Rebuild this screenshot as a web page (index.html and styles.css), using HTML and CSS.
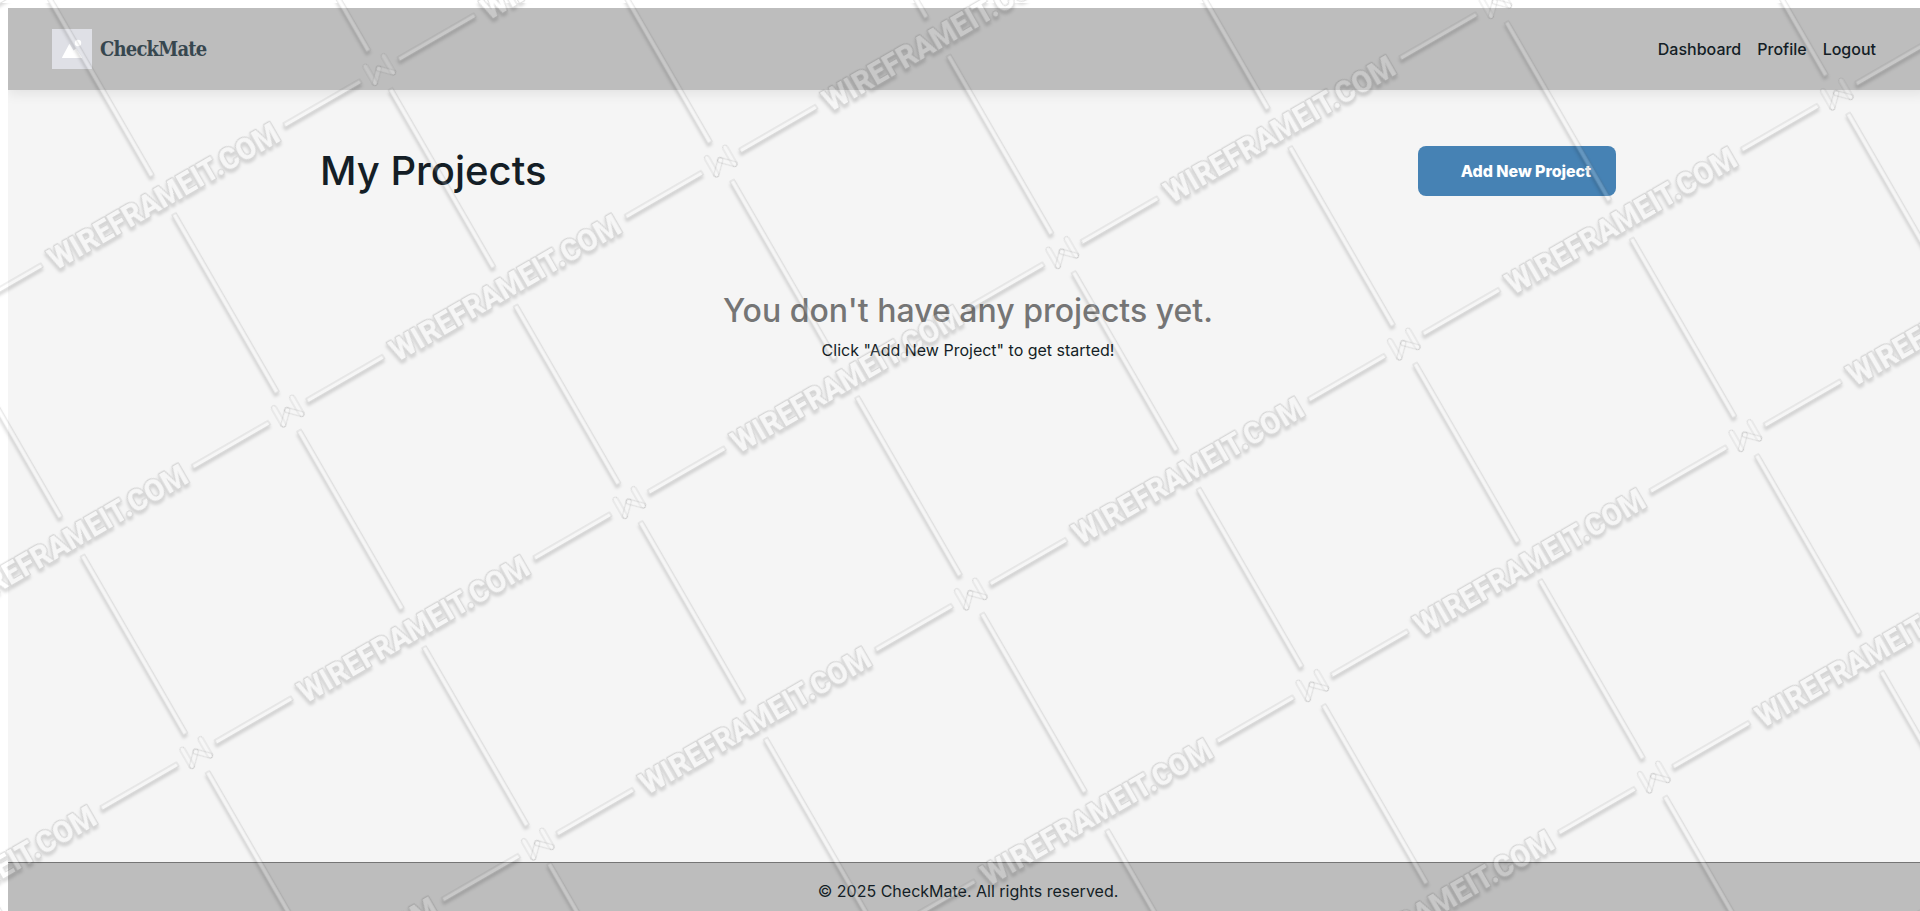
FILE: index.html
```html
<!DOCTYPE html>
<html lang="en">
<head>
<meta charset="utf-8">
<title>CheckMate</title>
<link rel="stylesheet" href="styles.css">
</head>
<body>
<div class="app">
  <header class="header">
    <div class="brand">
      <svg class="logo" viewBox="0 0 40 40"><rect width="40" height="40" fill="#dfe0e6"/><path d="M10 28.500 17 15.500Q17.500 14.500 18 15.500L21.500 21.500 24 19.500 30 28.500Q30 29 29 29H11Q10 29 10 28.500z" fill="#fff"/><circle cx="26" cy="14" r="3.200" fill="#fff"/></svg>
      <span class="brand-name">CheckMate</span>
    </div>
    <nav class="nav"><a>Dashboard</a><a>Profile</a><a>Logout</a></nav>
  </header>
  <main class="main">
    <div class="title-row">
      <h1 class="title">My Projects</h1>
      <button class="add-button">Add New Project</button>
    </div>
    <section class="empty">
      <h2 class="empty-title">You don't have any projects yet.</h2>
      <p class="empty-text">Click "Add New Project" to get started!</p>
    </section>
  </main>
  <footer class="footer">© 2025 CheckMate. All rights reserved.</footer>
</div>
<svg class="watermark" viewBox="0 0 1920 911" aria-hidden="true">
  <defs>
    <filter id="emboss" filterUnits="userSpaceOnUse" x="0" y="0" width="1920" height="911" color-interpolation-filters="sRGB">
      <feGaussianBlur in="SourceAlpha" stdDeviation="1.5"/>
      <feOffset dx="0" dy="3" result="shadow"/>
      <feFlood flood-color="#000" flood-opacity="0.14"/>
      <feComposite in2="shadow" operator="in" result="tint"/>
      <feComposite in="tint" in2="SourceAlpha" operator="out" result="outer"/>
      <feColorMatrix in="SourceGraphic" type="matrix" values="1 0 0 0 0  0 1 0 0 0  0 0 1 0 0  0 0 0 0.17 0" result="face"/>
      <feMerge><feMergeNode in="outer"/><feMergeNode in="face"/></feMerge>
    </filter>
    <g id="mark">
      <g class="mark-w">
        <rect x="-13" y="-12.500" width="5" height="24" rx="2.500"/>
        <rect x="8" y="-12.500" width="5" height="24" rx="2.500"/>
        <rect x="-2.500" y="-2.500" width="20" height="5" rx="2.500" transform="translate(-10.500 9) rotate(-45)"/>
        <rect x="-2.500" y="-2.500" width="20" height="5" rx="2.500" transform="translate(10.500 9) rotate(-135)"/>
      </g>
    </g>
    <g id="cell">
      <g class="mark-bar">
        <rect x="22" y="-2" width="88" height="4.500"/>
        <rect x="390" y="-2" width="88" height="4.500"/>
        <rect x="-2.250" y="22" width="4.500" height="206"/>
        <rect x="-2.250" y="272" width="4.500" height="206"/>
      </g>
      <text class="mark-text" x="250" y="11.500" textLength="261" lengthAdjust="spacingAndGlyphs">WIREFRAMEIT.COM</text>
    </g>
    <g id="row">
      <use href="#cell" x="-1500"/><use href="#cell" x="-1000"/><use href="#cell" x="-500"/>
      <use href="#cell"/><use href="#cell" x="500"/><use href="#cell" x="1000"/>
    </g>
    <g id="mark-row">
      <use href="#mark" x="-1500"/><use href="#mark" x="-1000"/><use href="#mark" x="-500"/>
      <use href="#mark"/><use href="#mark" x="500"/><use href="#mark" x="1000"/>
    </g>
  </defs>
  <g filter="url(#emboss)">
    <g transform="translate(971 594.500) rotate(-30)">
      <use href="#row" y="-1500"/><use href="#row" x="250" y="-1250"/>
      <use href="#row" y="-1000"/><use href="#row" x="250" y="-750"/>
      <use href="#row" y="-500"/><use href="#row" x="250" y="-250"/>
      <use href="#row"/><use href="#row" x="250" y="250"/>
      <use href="#row" y="500"/><use href="#row" x="250" y="750"/>
    </g>
  </g>
  <g transform="translate(971 594.500) rotate(-30)">
    <use href="#mark-row" y="-1000"/><use href="#mark-row" x="250" y="-750"/>
    <use href="#mark-row" y="-500"/><use href="#mark-row" x="250" y="-250"/>
    <use href="#mark-row"/><use href="#mark-row" x="250" y="250"/>
    <use href="#mark-row" y="500"/><use href="#mark-row" x="250" y="750"/>
  </g>
</svg>
</body>
</html>
```
FILE: styles.css
```css
html { background: #fff; overflow: hidden; }
body { margin: 8px 0 0 8px; font-family: Inter, "Liberation Sans", sans-serif; font-size: 16px; color: #141e26; }
.app { display: flex; flex-direction: column; width: 1920px; height: 903px; background: #f5f5f5; }
.header { display: flex; align-items: center; justify-content: space-between; height: 82px; padding: 0 52px 0 44px; box-sizing: border-box; background: #bdbdbd; box-shadow: 0 4px 12px rgba(0, 0, 0, 0.08); }
.brand { display: flex; align-items: center; gap: 8px; }
.logo { width: 40px; height: 40px; display: block; }
.brand-name { font-family: "Roboto Slab", "DejaVu Serif Condensed", "DejaVu Serif", serif; font-size: 20px; font-weight: 700; color: #37474f; letter-spacing: -0.8px; }
.nav { display: flex; gap: 16px; font-weight: 500; }
.main { flex: 1; width: 1296px; margin: 0 auto; }
.title-row { display: flex; align-items: center; justify-content: space-between; margin-top: 56px; height: 50px; }
.title { margin: 0; font-size: 40px; font-weight: 500; line-height: 48px; }
.add-button { width: 198px; height: 50px; padding: 0 24px 0 42px; border: 0; border-radius: 8px; background: #4682b4; color: #fff; font: 800 16px Inter, sans-serif; letter-spacing: -0.05px; white-space: nowrap; }
.empty { margin-top: 96px; text-align: center; }
.empty-title { margin: 0; font-size: 32px; font-weight: 500; line-height: 38px; color: #757575; }
.empty-text { margin: 8px 0 0; line-height: 24px; }
.footer { height: 49px; box-sizing: border-box; padding-top: 16px; border-top: 1px solid #757575; background: #bdbdbd; text-align: center; line-height: 24px; }
.watermark { position: absolute; left: 0; top: 0; width: 1920px; height: 911px; pointer-events: none; }
.mark-bar { fill: #fff; stroke: #555; stroke-width: 1; }
.mark-text { font-family: Roboto, sans-serif; font-size: 31px; font-weight: 800; text-anchor: middle; fill: #fff; stroke: #444; stroke-width: 2.4; stroke-linejoin: round; paint-order: stroke; }
.mark-w { fill: #fff; fill-opacity: 0.12; stroke: #555; stroke-opacity: 0.16; stroke-width: 1; }
```
